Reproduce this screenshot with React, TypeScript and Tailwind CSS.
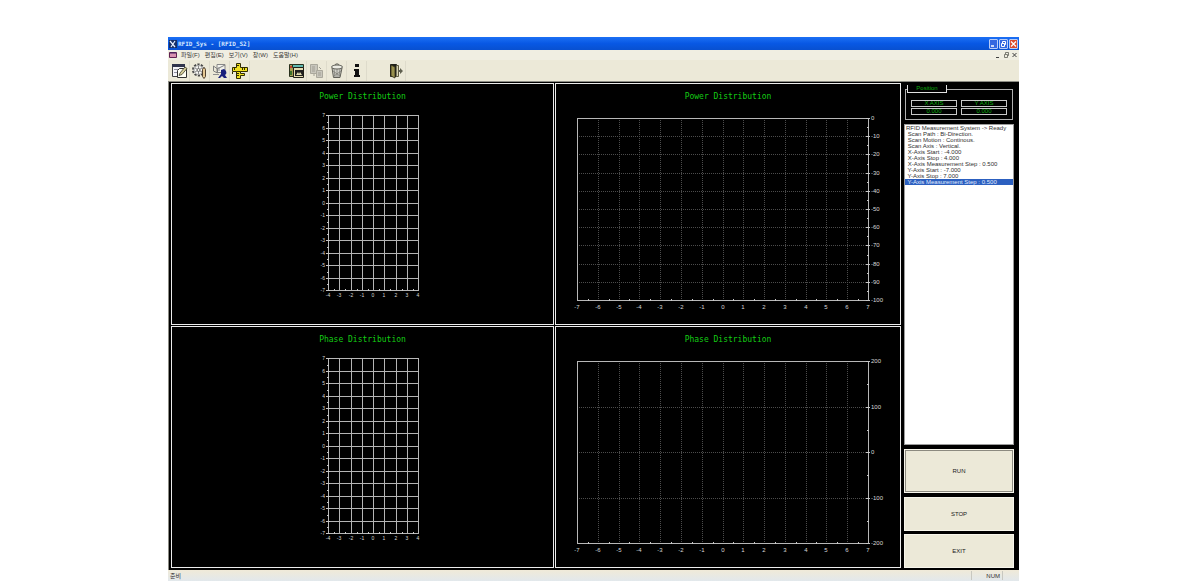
import React from 'react';

interface Tick {
  pos: number;
  label: string;
}

interface PlotProps {
  title: string;
  width: number;
  left: number;
  right: number;
  top: number;
  bottom: number;
  xTicks: Tick[];
  yTicks: Tick[];
  dotted?: boolean;
}

interface ToolProps {
  title: string;
  disabled?: boolean;
  children: React.ReactNode;
}

const MENU = ['파일(F)', '편집(E)', '보기(V)', '창(W)', '도움말(H)'];

const LOG = [
  'RFID Measurement System -> Ready',
  ' Scan Path : Bi-Direction.',
  ' Scan Motion : Continous.',
  ' Scan Axis : Vertical.',
  ' X-Axis Start : -4.000',
  ' X-Axis Stop : 4.000',
  ' X-Axis Measurement Step : 0.500',
  ' Y-Axis Start : -7.000',
  ' Y-Axis Stop : 7.000',
  ' Y-Axis Measurement Step : 0.500',
];

// Evenly spaced ticks from one end of an axis to the other
const makeTicks = (from: number, to: number, step: number, start: number, end: number): Tick[] => {
  const count = Math.round(Math.abs((to - from) / step));
  return Array.from({ length: count + 1 }, (_, i) => ({
    pos: Math.round(start + ((end - start) * i) / count),
    label: String(from + step * i),
  }));
};

const Plot: React.FC<PlotProps> = ({ title, width, left, right, top, bottom, xTicks, yTicks, dotted }) => {
  const grid = dotted ? '#4c4c4c' : '#b4b4b4';
  const dash = dotted ? '1 1' : undefined;
  const yAxis = dotted ? right : left;
  return (
    <section className="border border-[#ececec] bg-black pt-[7px] overflow-hidden">
      <h2 className="text-center text-[8px] leading-3 text-[#14cc14] font-['DejaVu_Sans_Mono',monospace]">{title}</h2>
      <svg
        viewBox={`0 0 ${width} 221`}
        className="block w-full h-[221px] font-['Liberation_Sans',sans-serif]"
        role="img"
        aria-label={title}
      >
        <g shapeRendering="crispEdges" fill="none" strokeWidth="1">
          {xTicks.map((t) => (
            <line key={t.label} x1={t.pos + 0.5} x2={t.pos + 0.5} y1={top} y2={bottom} stroke={grid} strokeDasharray={dash} />
          ))}
          {yTicks.map((t) => (
            <line key={t.label} x1={left} x2={right} y1={t.pos + 0.5} y2={t.pos + 0.5} stroke={grid} strokeDasharray={dash} />
          ))}
          <rect x={left + 0.5} y={top + 0.5} width={right - left} height={bottom - top} stroke="#b8b8b8" />
          {xTicks.slice(1).map((t, i) => {
            const mid = Math.round((t.pos + xTicks[i].pos) / 2) + 0.5;
            return <line key={t.label} x1={mid} x2={mid} y1={bottom - 1} y2={bottom + 1} stroke="#c8c8c8" />;
          })}
          {yTicks.map((t) => (
            <line key={t.label} x1={yAxis - 2} x2={yAxis + 2} y1={t.pos + 0.5} y2={t.pos + 0.5} stroke="#c8c8c8" />
          ))}
          {yTicks.slice(1).map((t, i) => {
            const mid = Math.round((t.pos + yTicks[i].pos) / 2) + 0.5;
            return <line key={t.label} x1={yAxis - 1} x2={yAxis + 1} y1={mid} y2={mid} stroke="#c8c8c8" />;
          })}
        </g>
        <g fill="#d8d8d8" fontSize={dotted ? 6 : 5}>
          {xTicks.map((t) => (
            <text key={t.label} x={t.pos} y={bottom + (dotted ? 9 : 7)} textAnchor="middle">{t.label}</text>
          ))}
          {yTicks.map((t) => (
            <text key={t.label} x={dotted ? right + 3 : left - 3} y={t.pos + 2} textAnchor={dotted ? 'start' : 'end'}>
              {t.label}
            </text>
          ))}
        </g>
      </svg>
    </section>
  );
};

const Tool: React.FC<ToolProps> = ({ title, disabled, children }) => (
  <button title={title} disabled={disabled} className="w-5 h-5 flex items-center justify-center border-r border-[#dedbcb]">
    <svg viewBox="0 0 16 16" className="w-4 h-4">
      {children}
    </svg>
  </button>
);

const Toolbar: React.FC = () => (
  <div className="flex items-center h-[21px] pl-[2px] bg-[#ece9d8]">
    <Tool title="Setup">
      <path d="M.5 1.500h12v12H.5z" fill="#f4f4f8" stroke="#404040" />
      <path d="M0 1h13v3H0z" fill="#30344c" />
      <path d="M2 6.500h4M2 9.500h3" stroke="#9090a0" />
      <path d="M7.500 5.500h7v9H5.500v-7z" fill="#fffff4" stroke="#303030" />
      <path d="M7 12.500l1-2.500L13 4l2 1.500-5 6z" fill="#d4cc98" stroke="#404030" strokeWidth=".8" />
    </Tool>
    <Tool title="Options">
      <circle cx="6.500" cy="7" r="5.500" fill="#f6f6f2" stroke="#484848" strokeWidth="2" strokeDasharray="2.200 1.250" />
      <circle cx="6.500" cy="7" r="4.500" fill="#f6f6f2" stroke="#909090" strokeWidth=".8" />
      <path d="M6.500 3v8M3 5l7 4M10 5l-7 4" stroke="#808080" strokeWidth=".9" />
      <circle cx="6.500" cy="7" r="1.500" fill="#f6f6f2" stroke="#505050" strokeWidth=".8" />
      <path d="M10.500 6.500c0-2 3-2 3 0v7l-1.500 2-1.500-2z" fill="#e4c894" stroke="#403020" strokeWidth=".9" />
    </Tool>
    <Tool title="Measure">
      <path d="M5 1.500h8v8H5z" fill="#f2f2ec" stroke="#888" />
      <path d="M1.500 3l4 3v4M1.500 3v5l4 2M5 6l8-4" fill="none" stroke="#808080" />
      <path d="M1 11.500h6M7 4v4" stroke="#909090" />
      <path d="M9 7l3-1c3 2 3 5 1 6l2 3h-3l-2-2-2 2H6l3-4z" fill="#18207c" />
    </Tool>
    <Tool title="Ruler">
      <path d="M4.500.5h4v4h7v4h-7v2h4v2h-4v3h-4v-7h-4v-4h4z" fill="#f0e020" stroke="#302c00" />
      <path d="M10.500 5v2M12.500 5v2M2.500 5v2M5 10.500h2M5 12.500h2M5 2.500h2M.5 9v2M4.500 8.500h4" stroke="#302c00" />
    </Tool>
    <div className="w-[37px]" />
    <Tool title="Capture">
      <path d="M.5 1.500h12v12H.5z" fill="#a49c50" stroke="#28301c" />
      <path d="M3.500 1.500h11v3h-11z" fill="#60b8b0" stroke="#28301c" />
      <path d="M4.500 4.500h10v10h-10z" fill="#e4dcb0" stroke="#202018" />
      <path d="M6 7h8v6H6z" fill="#202020" />
      <path d="M7 12l2-3 1 2 1-2 2 3z" fill="#e0dcb0" />
      <path d="M1 3h2v2H1z" fill="#c44030" />
      <path d="M1 8h2v4H1z" fill="#38702c" />
    </Tool>
    <Tool title="Copy" disabled>
      <path d="M1.500 1.500h7v9h-7z" fill="#c8c6bc" stroke="#aaa89c" />
      <path d="M3 4h3M3 6h3M3 8h3" stroke="#a09e94" />
      <path d="M7.500 7.500h6v7h-6z" fill="#c8c6bc" stroke="#aaa89c" />
      <path d="M4 12h2M10 4l2 2M9 10h3M9 12h3" stroke="#a09e94" />
    </Tool>
    <Tool title="Delete">
      <path d="M3 5l1.500 9.500h6.500L13 5z" fill="#d0d0c8" stroke="#606058" />
      <path d="M5 6l1 8M8 6v8M11 6l-1 8M4 8l7 5M12 8l-7 5" stroke="#808078" strokeWidth=".8" />
      <ellipse cx="8" cy="4" rx="5.500" ry="2" fill="#ececE4" stroke="#606058" />
      <path d="M6 2c0-1.500 4-1.500 4 0" fill="none" stroke="#606058" />
    </Tool>
    <Tool title="About">
      <path d="M6 1h4v3H6zM5 6h5v6h1v2H5v-2h1V8H5z" fill="#101010" />
    </Tool>
    <div className="w-[19px]" />
    <Tool title="Exit">
      <path d="M2.500 1.500h6v12h-6z" fill="#202018" stroke="#202018" />
      <path d="M3 2l4 2v11l-4-2z" fill="#98904c" stroke="#302c18" strokeWidth=".8" />
      <path d="M8.500 2.500h2v11h-2" fill="#d8d4b0" stroke="#605c40" />
      <path d="M10 7h2V5l3 3-3 3V9h-2z" fill="#606050" />
    </Tool>
  </div>
);

const TitleBar: React.FC = () => {
  const box = 'w-[9px] h-[10px] flex items-center justify-center rounded-[1px] border border-[#b8ccf8]';
  return (
    <header className="flex items-center h-[13px] px-px bg-linear-to-b from-[#1c70f4] via-[#0858e4] to-[#0850d0]">
      <svg viewBox="0 0 8 8" className="w-2 h-2">
        <path d="M0 0h8v8H0z" fill="#183068" />
        <path d="M1 1l5 6M6 1L2 7" stroke="#e8f0ff" strokeWidth="1.200" />
      </svg>
      <h1 className="ml-px text-[6px] leading-[13px] font-bold text-[#d4e6ff] font-['DejaVu_Sans_Mono',monospace]">
        RFID_Sys - [RFID_S2]
      </h1>
      <div className="ml-auto flex gap-px">
        <button aria-label="Minimize" className={`${box} bg-[#3468e0]`}>
          <svg viewBox="0 0 7 8" className="w-[7px] h-2"><path d="M1 6h3" stroke="#fff" strokeWidth="1.500" /></svg>
        </button>
        <button aria-label="Restore" className={`${box} bg-[#3468e0]`}>
          <svg viewBox="0 0 7 8" className="w-[7px] h-2">
            <path d="M2.500 3V1.500h3v3H4.500M1.500 3.500h3v3h-3z" fill="none" stroke="#fff" />
          </svg>
        </button>
        <button aria-label="Close" className={`${box} bg-[#dc4c30]`}>
          <svg viewBox="0 0 7 8" className="w-[7px] h-2"><path d="M1 1.500l5 5M6 1.500l-5 5" stroke="#fff" strokeWidth="1.200" /></svg>
        </button>
      </div>
    </header>
  );
};

const MenuBar: React.FC = () => (
  <nav className="flex items-center h-[10px] px-px bg-[#f0eee2]">
    <svg viewBox="0 0 8 8" className="w-2 h-2">
      <path d="M.5 1.500h7v5h-7z" fill="#d890b0" stroke="#602050" />
      <path d="M1 2h6" stroke="#402060" />
    </svg>
    <div className="ml-1 flex gap-[5px]">
      {MENU.map((item) => (
        <button key={item} className="text-[6px] leading-[10px] text-[#383838] whitespace-nowrap">{item}</button>
      ))}
    </div>
    <div className="ml-auto flex gap-px">
      <button aria-label="Minimize document">
        <svg viewBox="0 0 7 8" className="block w-[7px] h-2"><path d="M1 6.500h3" stroke="#404040" /></svg>
      </button>
      <button aria-label="Restore document">
        <svg viewBox="0 0 7 8" className="block w-[7px] h-2">
          <path d="M2.500 3V1.500h3v3H4.500M1.500 3.500h3v3h-3z" fill="none" stroke="#606058" strokeWidth=".8" />
        </svg>
      </button>
      <button aria-label="Close document">
        <svg viewBox="0 0 7 8" className="block w-[7px] h-2"><path d="M1.500 2l4 4M5.500 2l-4 4" stroke="#404040" /></svg>
      </button>
    </div>
  </nav>
);

const Position: React.FC = () => (
  <fieldset className="mx-px border border-[#b0b0b0] px-[5px] pt-[7px] pb-1 text-[6px] text-[#0cac0c]">
    <legend className="mr-auto -ml-1 w-10 h-2 border-x border-b border-[#e0e0e0] text-center leading-[7px]">Position</legend>
    <dl className="grid grid-cols-2 gap-x-1 gap-y-px text-center leading-[5px]">
      <dt className="h-[7px] border border-[#c8c8c8]">X AXIS</dt>
      <dt className="h-[7px] border border-[#c8c8c8]">Y AXIS</dt>
      <dd className="h-[7px] border border-[#c8c8c8]">0.000</dd>
      <dd className="h-[7px] border border-[#c8c8c8]">0.000</dd>
    </dl>
  </fieldset>
);

const Sidebar: React.FC = () => {
  const button = 'shrink-0 bg-[#ece9d8] text-[6px] text-[#202020] border';
  return (
    <aside className="w-[110px] shrink-0 flex flex-col pt-[2px]">
      <Position />
      <ul className="mt-1 flex-1 bg-white border border-[#9c9c9c] text-[6px] leading-[6px] text-[#303030]">
        {LOG.map((line, i) => (
          <li
            key={line}
            className={i === LOG.length - 1 ? 'pl-px whitespace-pre bg-[#2c60c0] text-[#e4ecff]' : 'pl-px whitespace-pre'}
          >
            {line}
          </li>
        ))}
      </ul>
      <button className={`${button} mt-1 h-11 border-[#f8f6ec] outline outline-[#8c8a80] -outline-offset-2`}>RUN</button>
      <button className={`${button} mt-1 h-[34px] border-[#f8f6ec]`}>STOP</button>
      <button className={`${button} mt-[3px] h-[34px] border-[#f8f6ec]`}>EXIT</button>
    </aside>
  );
};

const App: React.FC = () => {
  const power = { width: 381, left: 156, right: 246, top: 12, bottom: 187 };
  const line = { width: 344, left: 21, right: 312, top: 15, bottom: 197 };
  const areaX = makeTicks(-4, 4, 1, power.left, power.right);
  const areaY = makeTicks(7, -7, -1, power.top, power.bottom);
  const lineX = makeTicks(-7, 7, 1, line.left, line.right);

  return (
    <div className="min-h-screen bg-white pt-[37px] pl-[168px] pr-[171px] font-['Liberation_Sans','Noto_Sans_CJK_KR',sans-serif]">
      <TitleBar />
      <MenuBar />
      <Toolbar />
      <main className="flex gap-[3px] bg-black border-t border-l border-[#8c8c84] pt-px pl-[2px] pr-[5px] pb-[2px]">
        <div className="flex-1 grid grid-cols-[383fr_346fr] gap-px">
          <Plot title="Power Distribution" {...power} xTicks={areaX} yTicks={areaY} />
          <Plot title="Power Distribution" {...line} xTicks={lineX} yTicks={makeTicks(0, -100, -10, line.top, line.bottom)} dotted />
          <Plot title="Phase Distribution" {...power} xTicks={areaX} yTicks={areaY} />
          <Plot title="Phase Distribution" {...line} xTicks={lineX} yTicks={makeTicks(200, -200, -100, line.top, line.bottom)} dotted />
        </div>
        <Sidebar />
      </main>
      <footer className="flex items-center h-[11px] pl-[2px] pr-4 bg-linear-to-b from-[#f0ead8] to-[#e2e8ec] text-[6px] leading-[10px] text-[#303030]">
        <span>준비</span>
        <span className="ml-auto w-8 h-[9px] pr-[2px] border-x border-[#c8c8c0] text-right">NUM</span>
      </footer>
    </div>
  );
};

export default App;
